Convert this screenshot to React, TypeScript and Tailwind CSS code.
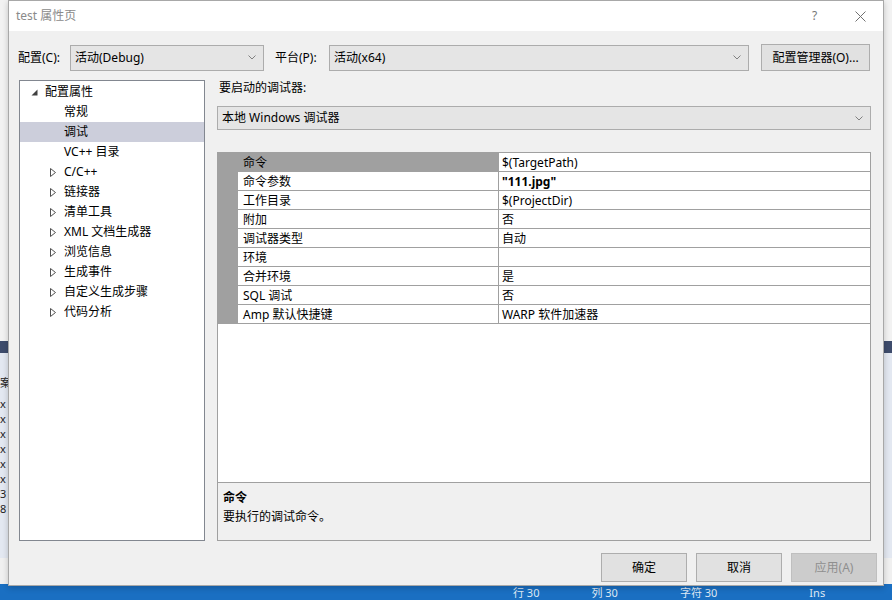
import React from 'react';

const treeItems: { label: string; level: 0 | 1; state?: 'open' | 'closed'; selected?: boolean }[] = [
  { label: '配置属性', level: 0, state: 'open' },
  { label: '常规', level: 1 },
  { label: '调试', level: 1, selected: true },
  { label: 'VC++ 目录', level: 1 },
  { label: 'C/C++', level: 1, state: 'closed' },
  { label: '链接器', level: 1, state: 'closed' },
  { label: '清单工具', level: 1, state: 'closed' },
  { label: 'XML 文档生成器', level: 1, state: 'closed' },
  { label: '浏览信息', level: 1, state: 'closed' },
  { label: '生成事件', level: 1, state: 'closed' },
  { label: '自定义生成步骤', level: 1, state: 'closed' },
  { label: '代码分析', level: 1, state: 'closed' },
];

const props: { name: string; value: string; bold?: boolean }[] = [
  { name: '命令', value: '$(TargetPath)' },
  { name: '命令参数', value: '"111.jpg"', bold: true },
  { name: '工作目录', value: '$(ProjectDir)' },
  { name: '附加', value: '否' },
  { name: '调试器类型', value: '自动' },
  { name: '环境', value: '' },
  { name: '合并环境', value: '是' },
  { name: 'SQL 调试', value: '否' },
  { name: 'Amp 默认快捷键', value: 'WARP 软件加速器' },
];

function Chevron() {
  return (
    <svg width="8" height="5" viewBox="0 0 8 5" className="shrink-0">
      <path d="M0.5 0.5 L4 4 L7.5 0.5" fill="none" stroke="#808080" strokeWidth="1" />
    </svg>
  );
}

function Combo({ text, className }: { text: string; className: string }) {
  return (
    <div className={`flex items-center justify-between border border-[#acacac] bg-[#e5e5e5] pl-[4px] pr-[7px] text-black ${className}`}>
      <span>{text}</span>
      <Chevron />
    </div>
  );
}

function OpenArrow() {
  return (
    <svg width="7" height="7" viewBox="0 0 7 7">
      <path d="M6.5 0.5 L6.5 6.5 L0.5 6.5 Z" fill="#404040" />
    </svg>
  );
}

function ClosedArrow() {
  return (
    <svg width="6" height="9" viewBox="0 0 6 9">
      <path d="M0.5 0.5 L5.5 4.5 L0.5 8.5 Z" fill="white" stroke="#505050" strokeWidth="1" />
    </svg>
  );
}

export default function App() {
  return (
    <div className="relative w-[892px] h-[600px] overflow-hidden bg-[#f2f2f2] text-[12px] font-['Noto_Sans','Noto_Sans_CJK_SC',sans-serif]">
      {/* window behind the dialog */}
      <div className="absolute inset-0 flex flex-col">
        <div className="h-[341px] bg-[#f2f2f2]" />
        <div className="h-[12px] bg-[#3e4c6c]" />
        <div className="flex-1 bg-[#e3e8f1] pt-[22px] text-[11px] leading-[15px] text-[#222]">
          <div className="mb-[6px]">案</div>
          <div>x</div>
          <div>x</div>
          <div>x</div>
          <div>x</div>
          <div>x</div>
          <div>x</div>
          <div>3</div>
          <div>8</div>
        </div>
        <div className="h-[26px] bg-[#f0f0f0]" />
        <div className="h-[16px] bg-[#1a6fc2] flex items-end pb-[1px] text-[11px] leading-[12px] text-[#dfe9f5]">
          <span className="ml-[513px]">行 30</span>
          <span className="ml-[52px]">列 30</span>
          <span className="ml-[62px]">字符 30</span>
          <span className="ml-[92px]">Ins</span>
        </div>
      </div>

      {/* dialog */}
      <div className="absolute left-[8px] top-0 w-[876px] h-[586px] border border-[#a8a8a8] bg-[#f0f0f0] flex flex-col shadow-[0_2px_6px_rgba(0,0,0,0.2)]">
        <div className="h-[30px] bg-white flex items-center pl-[7px] text-[#8a8a8a]">
          <span>test 属性页</span>
          <span className="ml-auto w-[10px] text-[12px] text-[#777]">?</span>
          <svg width="11" height="11" viewBox="0 0 11 11" className="ml-[33px] mr-[17px]">
            <path d="M0.5 0.5 L10.5 10.5 M10.5 0.5 L0.5 10.5" stroke="#707070" strokeWidth="1" />
          </svg>
        </div>

        <div className="flex-1 flex flex-col pl-[10px] pr-[12px] pt-[13px] text-black">
          {/* configuration row */}
          <div className="h-[27px] flex items-center">
            <span className="w-[52px] -ml-[1px]">配置(C):</span>
            <Combo text="活动(Debug)" className="w-[194px] h-[26px]" />
            <span className="ml-[11px] w-[54px]">平台(P):</span>
            <Combo text="活动(x64)" className="w-[420px] h-[26px]" />
            <div className="ml-[12px] w-[109px] h-[27px] border border-[#adadad] bg-[#e1e1e1] flex items-center justify-center">
              配置管理器(O)...
            </div>
          </div>

          <div className="mt-[9px] h-[461px] flex">
            {/* tree */}
            <div className="w-[186px] border border-[#828790] bg-white pt-[1px]">
              {treeItems.map((item) => (
                <div
                  key={item.label}
                  className={`h-[20px] flex items-center ${item.selected ? 'bg-[#cccedb]' : ''}`}
                >
                  {item.level === 0 ? (
                    <div className="w-[25px] flex items-center justify-end pr-[7px]">
                      <OpenArrow />
                    </div>
                  ) : (
                    <div className="w-[44px] flex items-center justify-end pr-[8px]">
                      {item.state === 'closed' && <ClosedArrow />}
                    </div>
                  )}
                  <span>{item.label}</span>
                </div>
              ))}
            </div>

            {/* right side */}
            <div className="flex-1 ml-[12px] flex flex-col">
              <div className="h-[16px] leading-[16px] pl-[2px]">要启动的调试器:</div>
              <Combo text="本地 Windows 调试器" className="mt-[10px] h-[24px]" />

              <div className="mt-[22px] h-[331px] border border-[#a0a0a0] bg-white">
                {props.map((p, i) => (
                  <div key={p.name} className="h-[19px] flex">
                    <div className="w-[20px] bg-[#a0a0a0]" />
                    <div
                      className={`w-[261px] pl-[5px] pt-[1px] flex items-center border-b border-r border-[#a0a0a0] ${i === 0 ? 'bg-[#a0a0a0]' : ''}`}
                    >
                      {p.name}
                    </div>
                    <div className={`flex-1 pl-[3px] pt-[1px] flex items-center border-b border-[#a0a0a0] ${p.bold ? 'font-bold' : ''}`}>
                      {p.value}
                    </div>
                  </div>
                ))}
              </div>

              <div className="h-[58px] border-x border-b border-[#a0a0a0] bg-[#f0f0f0] pl-[5px] pt-[5px] leading-[19px]">
                <div className="font-bold">命令</div>
                <div>要执行的调试命令。</div>
              </div>
            </div>
          </div>

          {/* buttons */}
          <div className="mt-[12px] -mr-[6px] flex justify-end gap-[9px]">
            <div className="w-[86px] h-[29px] border border-[#adadad] bg-[#e1e1e1] flex items-center justify-center">确定</div>
            <div className="w-[86px] h-[29px] border border-[#adadad] bg-[#e1e1e1] flex items-center justify-center">取消</div>
            <div className="w-[86px] h-[29px] border border-[#bfbfbf] bg-[#cccccc] text-[#8f8f8f] flex items-center justify-center">应用(A)</div>
          </div>
        </div>
      </div>
    </div>
  );
}
